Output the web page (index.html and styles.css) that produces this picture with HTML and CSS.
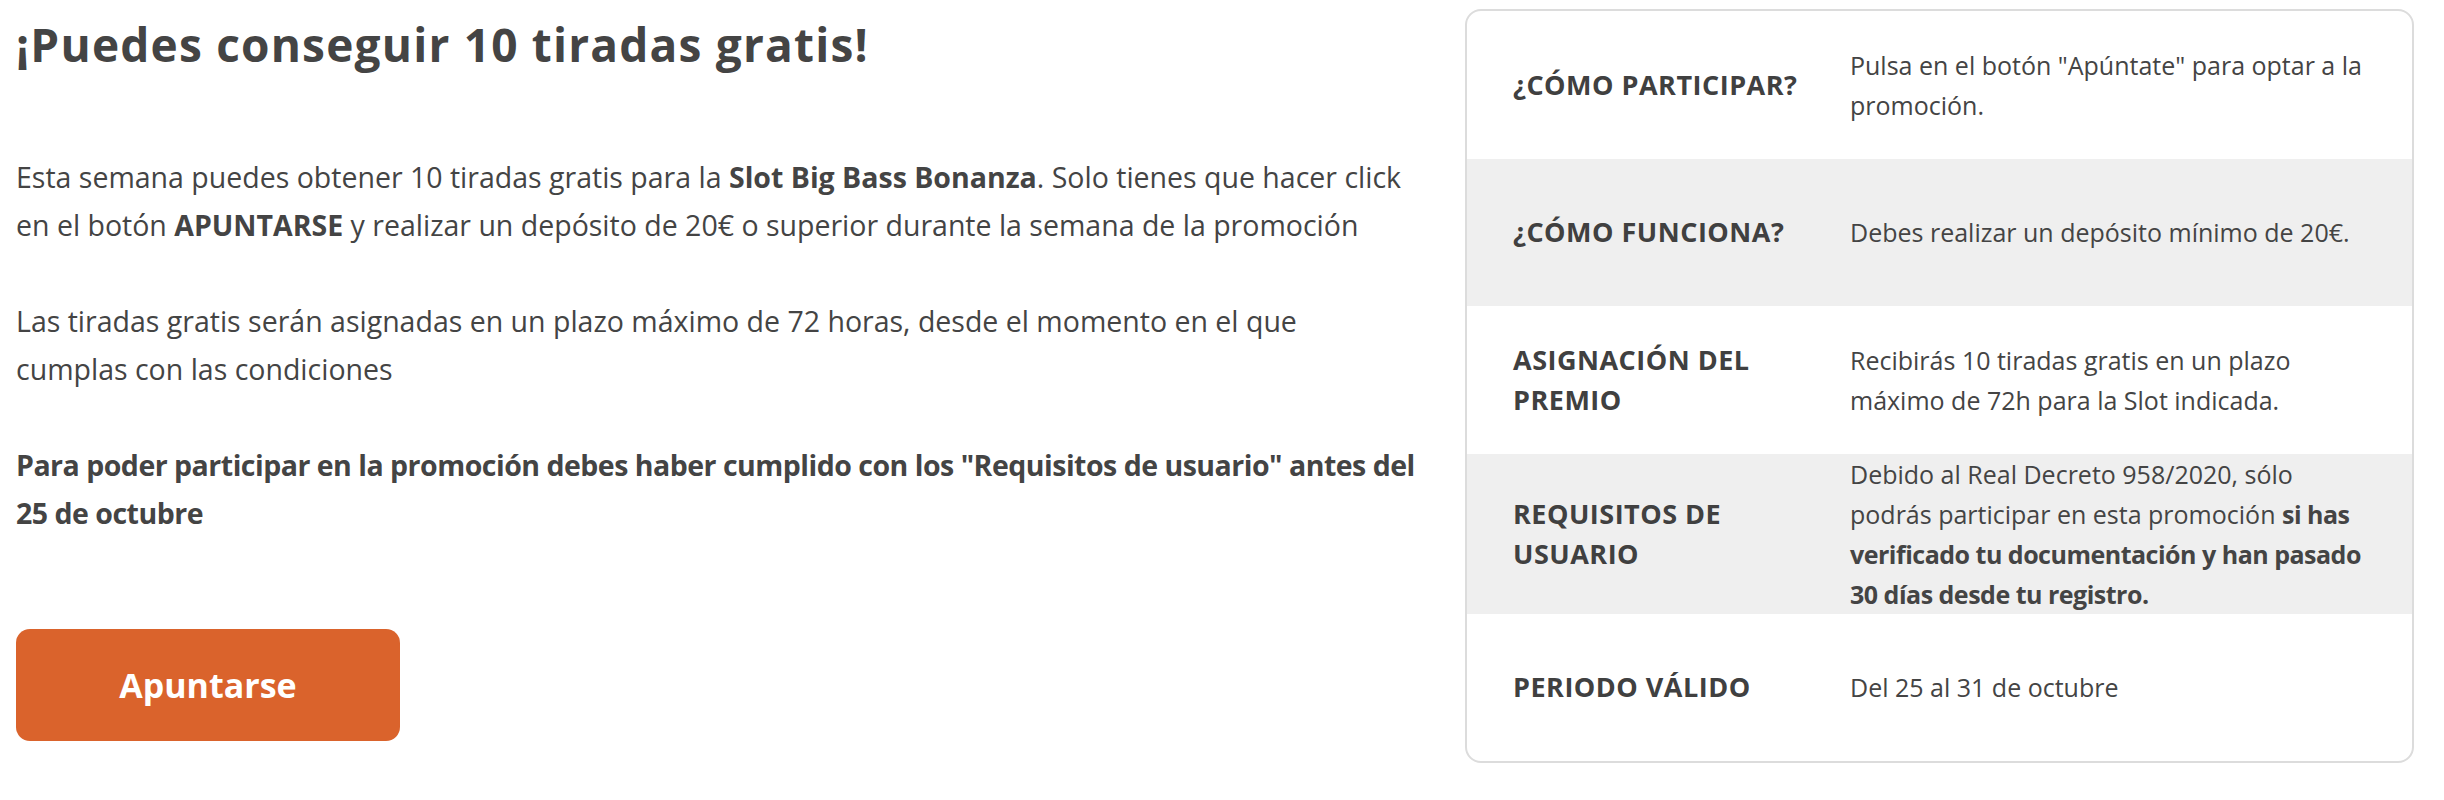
FILE: index.html
```html
<!DOCTYPE html>
<html lang="es">
	<head>
		<meta charset="utf-8">
		<title>Tiradas gratis</title>
		<link rel="stylesheet" href="styles.css">
	</head>
	<body>
		<div class="promo">
			<div class="promo-info">
				<h1>¡Puedes conseguir 10 tiradas gratis!</h1>
				<p>Esta semana puedes obtener 10 tiradas gratis para la <b>Slot Big Bass Bonanza</b>. Solo tienes que hacer click<br>en el botón <b>APUNTARSE</b> y realizar un depósito de 20€ o superior durante la semana de la promoción</p>
				<p>Las tiradas gratis serán asignadas en un plazo máximo de 72 horas, desde el momento en el que<br>cumplas con las condiciones</p>
				<p class="strong">Para poder participar en la promoción debes haber cumplido con los "Requisitos de usuario" antes del<br>25 de octubre</p>
				<a class="btn-join" href="#">Apuntarse</a>
			</div>

			<div class="promo-card">
				<div class="row">
					<div class="label">¿Cómo participar?</div>
					<div class="value">Pulsa en el botón "Apúntate" para optar a la<br>promoción.</div>
				</div>
				<div class="row grey">
					<div class="label">¿Cómo funciona?</div>
					<div class="value">Debes realizar un depósito mínimo de 20€.</div>
				</div>
				<div class="row">
					<div class="label">Asignación del<br>premio</div>
					<div class="value">Recibirás 10 tiradas gratis en un plazo<br>máximo de 72h para la Slot indicada.</div>
				</div>
				<div class="row grey">
					<div class="label">Requisitos de<br>usuario</div>
					<div class="value">Debido al Real Decreto 958/2020, sólo<br>podrás participar en esta promoción <b>si has<br>verificado tu documentación y han pasado<br>30 días desde tu registro.</b></div>
				</div>
				<div class="row">
					<div class="label">Periodo válido</div>
					<div class="value">Del 25 al 31 de octubre</div>
				</div>
			</div>
		</div>
	</body>
</html>
```

FILE: styles.css
```css
body {
	margin: 0;
	background: #fff;
	color: #444;
	font-family: "Open Sans", "Noto Sans", sans-serif;
}

.promo {
	display: flex;
	align-items: flex-start;
	gap: 49px;
	padding: 0 30px 0 16px;
}

.promo-info {
	flex: 1;
	padding-top: 17px;
}

.promo-info h1 {
	margin: 0 0 81px;
	font-size: 46px;
	line-height: 1.2;
	font-weight: 700;
	letter-spacing: 1.2px;
	color: #444;
}

.promo-info p {
	margin: 0 0 48px;
	font-size: 28.5px;
	line-height: 48px;
	white-space: nowrap;
}

.promo-info p.strong {
	font-weight: 700;
	letter-spacing: -0.5px;
	margin-bottom: 0;
}

.btn-join {
	display: flex;
	align-items: center;
	justify-content: center;
	width: 384px;
	height: 112px;
	margin-top: 92px;
	border-radius: 14px;
	background: #da632c;
	color: #fff;
	font-size: 34px;
	font-weight: 700;
	text-decoration: none;
}

.promo-card {
	width: 949px;
	box-sizing: border-box;
	margin-top: 9px;
	border: 2px solid #dcdcdc;
	border-radius: 16px;
	overflow: hidden;
}

.row {
	display: grid;
	grid-template-columns: 337px 1fr;
	align-items: center;
	min-height: 147.5px;
	padding: 0 48px 0 46px;
	font-size: 25px;
	line-height: 40px;
}

.row.grey {
	background: #efefef;
}

.label {
	font-size: 27px;
	font-weight: 700;
	letter-spacing: 0.5px;
	text-transform: uppercase;
	color: #404040;
}

.value {
	white-space: nowrap;
}

.value b {
	letter-spacing: -0.5px;
}
```
